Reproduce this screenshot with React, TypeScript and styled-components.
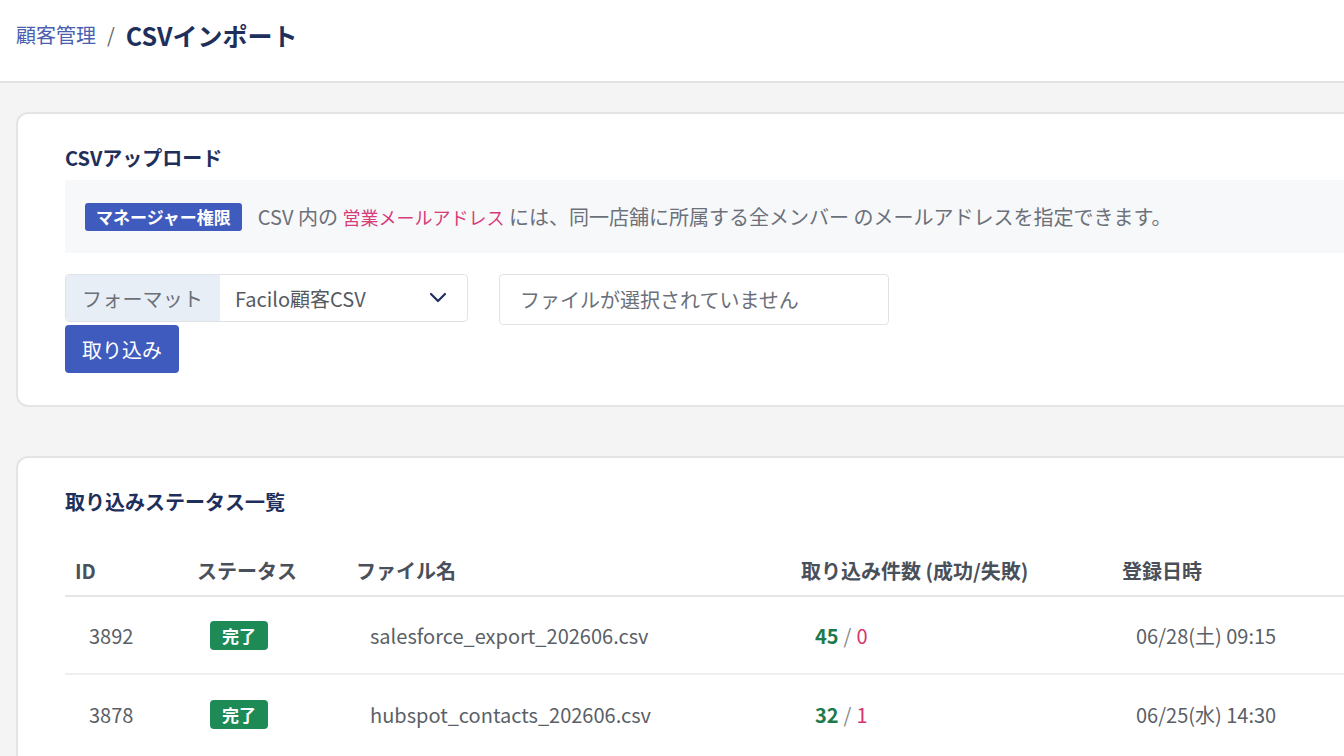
import React from "react";
import styled, { createGlobalStyle } from "styled-components";

const GlobalStyle = createGlobalStyle`
  html, body {
    margin: 0;
    padding: 0;
    overflow: hidden;
    background: #f4f4f4;
  }
  body {
    font-family: "Noto Sans CJK JP", "Noto Sans", sans-serif;
    color: #4a4f57;
  }
  * {
    box-sizing: border-box;
  }
`;

const Header = styled.header`
  height: 83px;
  background: #ffffff;
  border-bottom: 2px solid #e2e2e2;
  display: flex;
  align-items: center;
  padding: 0 0 12px 16px;
  gap: 11px;
`;

const Crumb = styled.span`
  font-size: 20px;
  color: #4a5fb0;
`;

const Slash = styled.span`
  font-size: 20px;
  color: #666;
`;

const PageTitle = styled.h1`
  margin: 0;
  font-size: 25px;
  font-weight: 700;
  color: #1f2f5c;
`;

const Main = styled.main`
  width: 1440px;
  padding: 29px 0 0 16px;
  display: flex;
  flex-direction: column;
  gap: 49px;
`;

const Card = styled.section`
  background: #ffffff;
  border: 2px solid #e4e4e4;
  border-radius: 12px;
  padding: 30px 47px 32px;
`;

const CardTitle = styled.h2`
  margin: 0 0 8px;
  font-size: 20px;
  line-height: 28px;
  font-weight: 700;
  color: #1f2f5c;
`;

const Notice = styled.div`
  background: #f7f8fa;
  height: 73px;
  display: flex;
  align-items: center;
  padding-left: 20px;
  gap: 16px;
  font-size: 20px;
  color: #6b7079;
`;

const RoleBadge = styled.span`
  background: #3f5bbd;
  color: #ffffff;
  font-size: 17px;
  font-weight: 700;
  border-radius: 3px;
  padding: 0 11px;
  line-height: 28px;
`;

const Pink = styled.span`
  color: #d63c7a;
  font-size: 18px;
`;

const FormRow = styled.div`
  display: flex;
  align-items: flex-start;
  gap: 31px;
  margin-top: 21px;
`;

const InputGroup = styled.div`
  display: flex;
  width: 403px;
  height: 48px;
  border: 1px solid #dfe3e8;
  border-radius: 4px;
  overflow: hidden;
`;

const GroupLabel = styled.span`
  width: 154px;
  background: #e8eef5;
  display: flex;
  align-items: center;
  padding-left: 16px;
  font-size: 20px;
  color: #6b7079;
  letter-spacing: 0.2px;
`;

const Select = styled.div`
  flex: 1;
  display: flex;
  align-items: center;
  justify-content: space-between;
  padding: 0 20px 0 15px;
  font-size: 20px;
  color: #555a62;
`;

const FileInput = styled.div`
  width: 390px;
  height: 51px;
  border: 1px solid #dfe3e8;
  border-radius: 4px;
  display: flex;
  align-items: center;
  padding-left: 20px;
  font-size: 20px;
  color: #6b7079;
`;

const ImportButton = styled.button`
  display: block;
  width: 114px;
  height: 48px;
  border: none;
  border-radius: 4px;
  background: #3f5bbd;
  color: #ffffff;
  font-family: inherit;
  font-size: 20px;
  padding: 0;
`;

const Table = styled.div`
  display: grid;
  grid-template-columns: 122px 159px 445px 321px 1fr;
  margin-top: 29px;
`;

const Th = styled.div`
  padding-left: 10px;
  height: 52px;
  display: flex;
  align-items: center;
  font-size: 20px;
  font-weight: 700;
  color: #4a505a;
  border-bottom: 2px solid #e6e6e6;
`;

const Td = styled.div<{ $last?: boolean }>`
  padding-left: 24px;
  height: 78px;
  display: flex;
  align-items: center;
  font-size: 20px;
  color: #5a5f67;
  border-bottom: ${(p) => (p.$last ? "none" : "2px solid #efefef")};
`;

const DoneBadge = styled.span`
  background: #1e8a56;
  color: #ffffff;
  font-size: 17px;
  font-weight: 700;
  border-radius: 4px;
  padding: 0 12px;
  line-height: 29px;
  margin-left: -1px;
`;

const Success = styled.span`
  color: #1e7a4c;
  font-weight: 700;
`;

const Sep = styled.span`
  color: #888;
  margin: 0 5px;
`;

const Fail = styled.span`
  color: #d6336c;
`;

const rows = [
  { id: 3892, file: "salesforce_export_202606.csv", ok: 45, ng: 0, date: "06/28(土) 09:15" },
  { id: 3878, file: "hubspot_contacts_202606.csv", ok: 32, ng: 1, date: "06/25(水) 14:30" },
];

const Chevron = () => (
  <svg width="18" height="12" viewBox="0 0 18 12" fill="none">
    <path d="M2 2l7 7 7-7" stroke="#1f2f5c" strokeWidth="2.2" strokeLinecap="round" strokeLinejoin="round" />
  </svg>
);

const App: React.FC = () => {
  return (
    <>
      <GlobalStyle />
      <Header>
        <Crumb>顧客管理</Crumb>
        <Slash>/</Slash>
        <PageTitle>CSVインポート</PageTitle>
      </Header>
      <Main>
        <Card>
          <CardTitle>CSVアップロード</CardTitle>
          <Notice>
            <RoleBadge>マネージャー権限</RoleBadge>
            <span>
              CSV 内の <Pink>営業メールアドレス</Pink> には、同一店舗に所属する全メンバー のメールアドレスを指定できます。
            </span>
          </Notice>
          <FormRow>
            <InputGroup>
              <GroupLabel>フォーマット</GroupLabel>
              <Select>
                <span>Facilo顧客CSV</span>
                <Chevron />
              </Select>
            </InputGroup>
            <FileInput>ファイルが選択されていません</FileInput>
          </FormRow>
          <ImportButton>取り込み</ImportButton>
        </Card>
        <Card>
          <CardTitle>取り込みステータス一覧</CardTitle>
          <Table>
            <Th>ID</Th>
            <Th>ステータス</Th>
            <Th>ファイル名</Th>
            <Th>取り込み件数 (成功/失敗)</Th>
            <Th>登録日時</Th>
            {rows.map((r, i) => {
              const last = i === rows.length - 1;
              return (
                <React.Fragment key={r.id}>
                  <Td $last={last}>{r.id}</Td>
                  <Td $last={last}>
                    <DoneBadge>完了</DoneBadge>
                  </Td>
                  <Td $last={last}>{r.file}</Td>
                  <Td $last={last}>
                    <Success>{r.ok}</Success>
                    <Sep>/</Sep>
                    <Fail>{r.ng}</Fail>
                  </Td>
                  <Td $last={last}>{r.date}</Td>
                </React.Fragment>
              );
            })}
          </Table>
        </Card>
      </Main>
    </>
  );
};

export default App;
